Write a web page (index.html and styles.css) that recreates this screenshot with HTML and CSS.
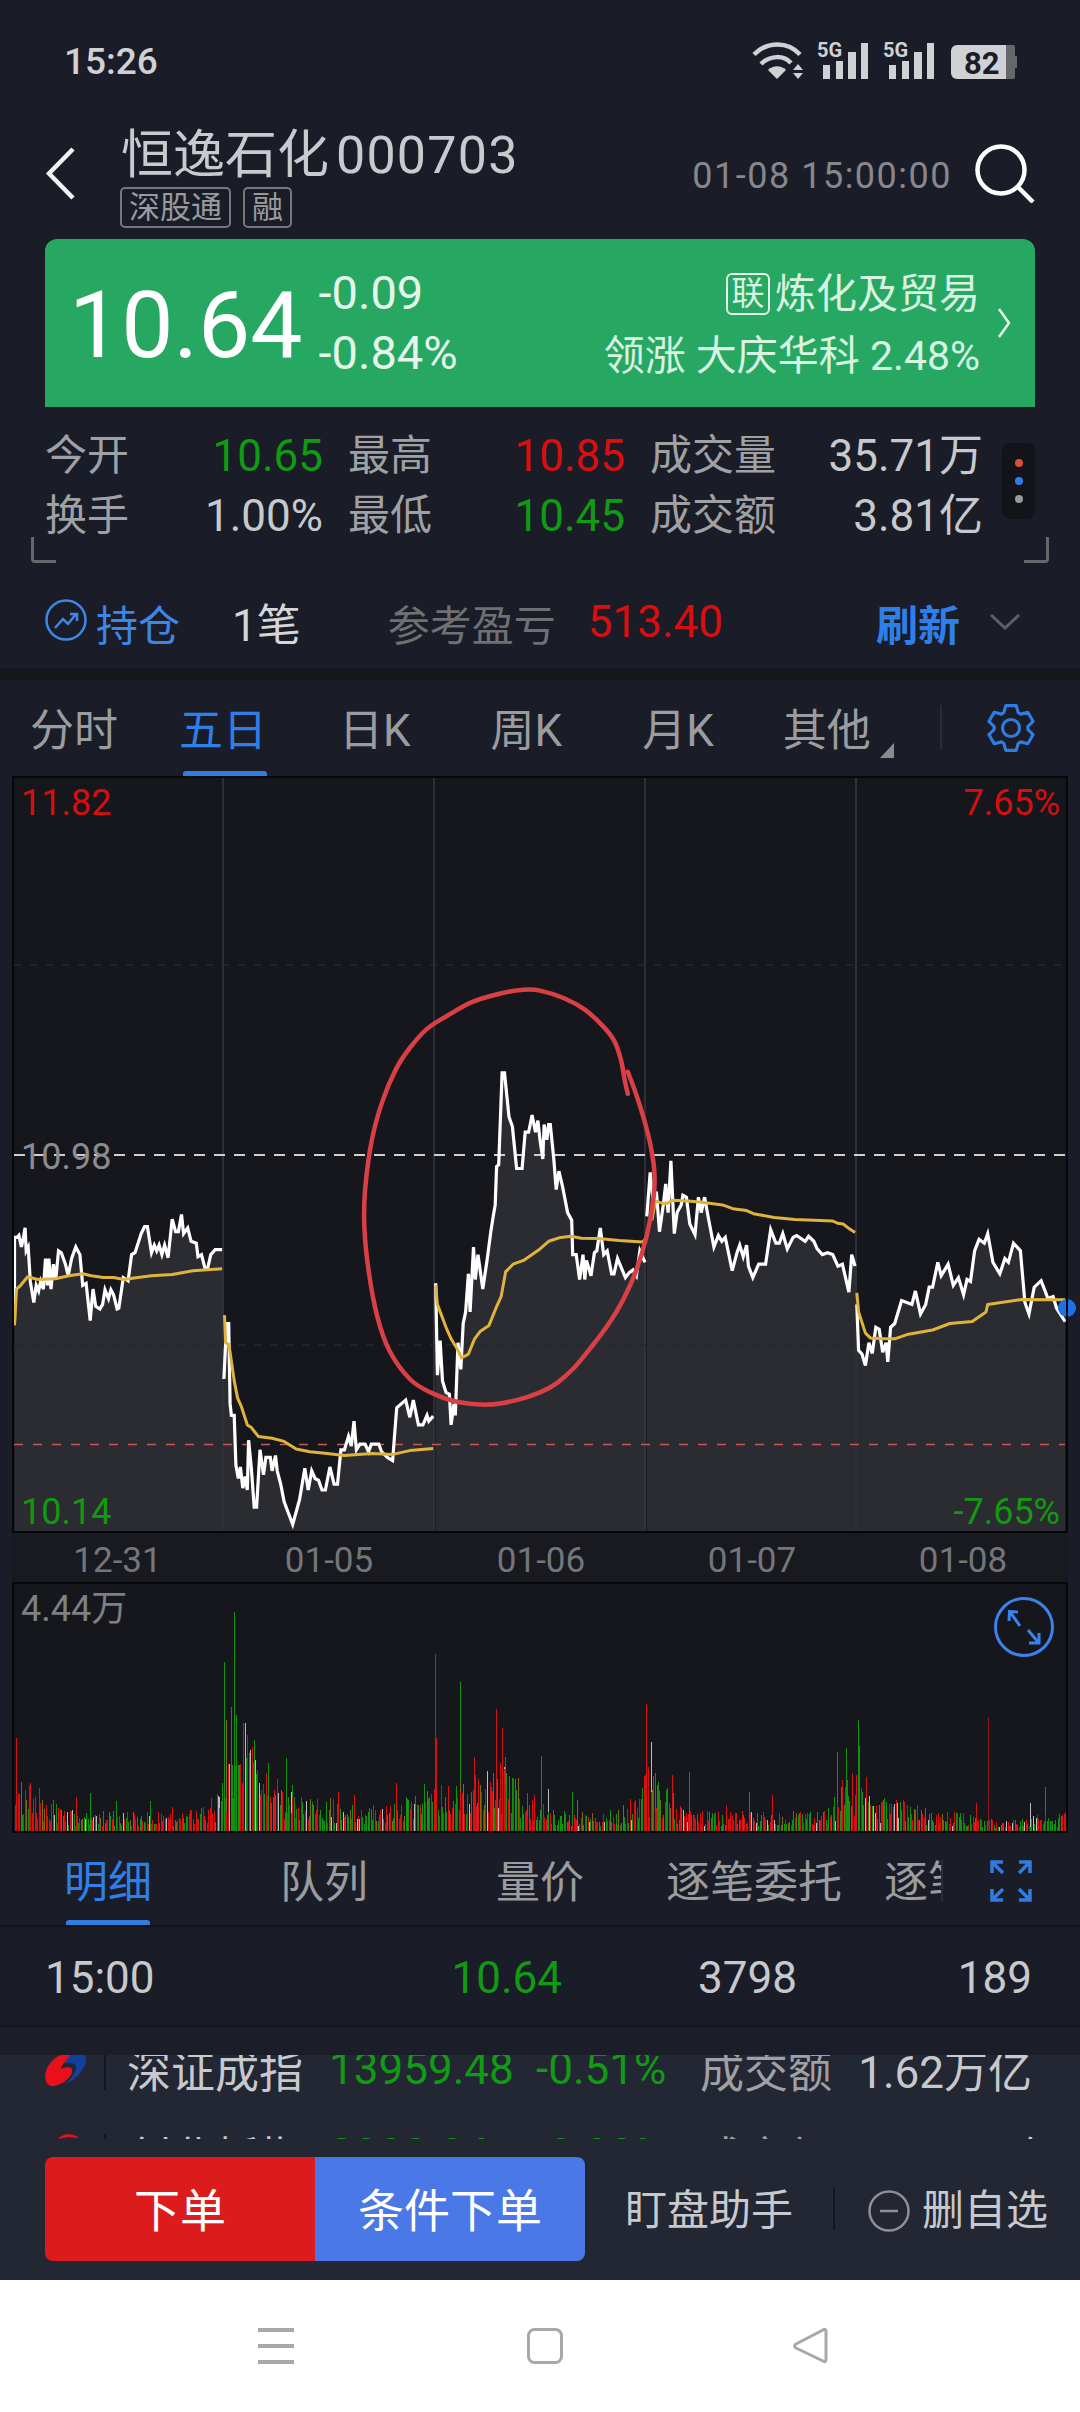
FILE: index.html
```html
<!DOCTYPE html>
<html lang="zh-CN">
<head>
<meta charset="utf-8">
<title>恒逸石化 000703</title>
<link rel="stylesheet" href="styles.css">
</head>
<body>
<div class="phone">
  <div class="status">
    <span class="time">15:26</span>
    <svg class="status-icons" width="264" height="36" viewBox="753 44 264 36">
      <g fill="none" stroke="#d0d1d5" stroke-width="4.5">
        <path d="M754 55.5C767 42 788 42 800 55.5"/>
        <path d="M761 65C770 56 784 56 791 64"/>
      </g>
      <path d="M768 71C773 66 781 66 786 71L777 80Z" fill="#d0d1d5"/>
      <path d="M798 65l5 6h-10zM798 80l5-6h-10z" fill="#d0d1d5"/>
      <text class="fiveg" x="817" y="58">5G</text>
      <path d="M823 66h7v14h-7zM836 62h7v18h-7zM848 53h8v27h-8zM861 44h7v36h-7z" fill="#d0d1d5"/>
      <text class="fiveg" x="883" y="58">5G</text>
      <path d="M889 66h7v14h-7zM902 62h7v18h-7zM914 53h8v27h-8zM927 44h7v36h-7z" fill="#d0d1d5"/>
      <path d="M957 46h49v34h-49a6 6 0 0 1-6-6v-22a6 6 0 0 1 6-6z" fill="#d0d1d5"/>
      <path d="M1006 46h7a2 2 0 0 1 2 2v9h2v12h-2v9a2 2 0 0 1-2 2h-7z" fill="#66676d"/>
      <text class="batt" x="964" y="75">82</text>
    </svg>
  </div>

  <header class="header">
    <svg class="back" width="31" height="53" viewBox="0 0 31 53"><path d="M28 2L4 26.500L28 51" fill="none" stroke="#f2f2f2" stroke-width="4.500"/></svg>
    <div class="title-col">
      <div class="title">恒逸石化<span class="code">000703</span></div>
      <div class="tags"><span class="tag">深股通</span><span class="tag">融</span></div>
    </div>
    <div class="header-right">
      <span class="date">01-08 15:00:00</span>
      <svg class="search" width="60" height="60" viewBox="0 0 60 60"><circle cx="26" cy="27" r="23.500" fill="none" stroke="#fff" stroke-width="4.500"/><path d="M43 44L58 59" stroke="#fff" stroke-width="4.500"/></svg>
    </div>
  </header>

  <section class="quote">
    <div class="price">10.64</div>
    <div class="change">
      <div>-0.09</div>
      <div>-0.84%</div>
    </div>
    <div class="sector">
      <div class="sector-top"><span class="lian">联</span>炼化及贸易</div>
      <div class="sector-bottom">领涨 大庆华科 2.48%</div>
    </div>
    <svg class="quote-arrow" width="14" height="30" viewBox="0 0 14 30"><path d="M2 1L12 15L2 29" fill="none" stroke="#e4f6ea" stroke-width="2.500"/></svg>
  </section>

  <section class="stats">
    <div class="stat-grid">
      <div class="stat"><span class="lbl">今开</span><span class="green">10.65</span></div>
      <div class="stat"><span class="lbl">最高</span><span class="red">10.85</span></div>
      <div class="stat"><span class="lbl">成交量</span><span class="val">35.71万</span></div>
      <div class="stat"><span class="lbl">换手</span><span class="val">1.00%</span></div>
      <div class="stat"><span class="lbl">最低</span><span class="green">10.45</span></div>
      <div class="stat"><span class="lbl">成交额</span><span class="val">3.81亿</span></div>
    </div>
    <div class="pill"><i class="dot dot-r"></i><i class="dot dot-b"></i><i class="dot dot-g"></i></div>
    <i class="corner corner-l"></i><i class="corner corner-r"></i>
  </section>

  <section class="hold">
    <svg class="hold-icon" width="42" height="42" viewBox="0 0 42 42"><circle cx="21" cy="21" r="19.500" fill="none" stroke="#3d87e8" stroke-width="2.500"/><path d="M10 29L18 20L23 25L31 15M25 15H32V22" fill="none" stroke="#3d87e8" stroke-width="2.500"/></svg>
    <span class="hold-name">持仓</span>
    <span class="hold-count">1笔</span>
    <span class="hold-label">参考盈亏</span>
    <span class="hold-value">513.40</span>
    <span class="hold-refresh">刷新</span>
    <svg class="hold-arrow" width="30" height="16" viewBox="0 0 30 16"><path d="M1 1L15 14L29 1" fill="none" stroke="#5f6066" stroke-width="3"/></svg>
  </section>
  <div class="band"></div>

  <nav class="tabs">
    <span class="tab tab-1">分时</span>
    <span class="tab tab-2 active">五日</span>
    <span class="tab tab-3">日K</span>
    <span class="tab tab-4">周K</span>
    <span class="tab tab-5">月K</span>
    <span class="tab tab-6">其他<svg class="tab-tri" width="14" height="15" viewBox="0 0 14 15"><path d="M14 0V15H0Z" fill="#8a8b8f"/></svg></span>
    <div class="tabs-tail">
      <i class="tab-div"></i>
      <svg width="48" height="48" viewBox="0 0 48 48" fill="none" stroke="#2f7de1" stroke-width="3.200" stroke-linejoin="round"><path d="M18.800 1.600H29.200L31.200 8.600L33.800 10.100L40.800 8.300L46 17.300L40.900 22.500V25.500L46 30.700L40.800 39.700L33.800 37.900L31.200 39.400L29.200 46.400H18.800L16.800 39.400L14.200 37.900L7.200 39.700L2 30.700L7.100 25.500V22.500L2 17.300L7.200 8.300L14.200 10.100L16.800 8.600Z"/><circle cx="24" cy="24" r="8.500"/></svg>
    </div>
  </nav>

  <section class="chart">
    <svg class="plot" id="price-svg" width="1056" height="757" viewBox="0 0 1056 757"></svg>
    <span class="axis axis-tl">11.82</span>
    <span class="axis axis-tr">7.65%</span>
    <span class="axis axis-ml">10.98</span>
    <span class="axis axis-bl">10.14</span>
    <span class="axis axis-br">-7.65%</span>
  </section>
  <div class="dates"><span>12-31</span><span>01-05</span><span>01-06</span><span>01-07</span><span>01-08</span></div>
  <section class="volume">
    <svg class="plot" id="vol-svg" width="1056" height="251" viewBox="0 0 1056 251"></svg>
    <span class="vol-max">4.44万</span>
    <svg class="vol-expand" width="60" height="60" viewBox="0 0 60 60" fill="none" stroke="#3b82ec" stroke-width="3"><circle cx="30" cy="30" r="28.500"/><path d="M26 29L16 15M15 24L15.500 14.500L24 15M34 33L44 45M45 36V46H35"/></svg>
  </section>

  <section class="sub">
    <div class="sub-list">
      <span class="sub-tab active">明细</span>
      <span class="sub-tab s2">队列</span>
      <span class="sub-tab s3">量价</span>
      <span class="sub-tab s4">逐笔委托</span>
      <span class="sub-tab s5">逐笔成交</span>
    </div>
    <i class="sub-div"></i>
    <svg class="sub-icon" width="42" height="42" viewBox="0 0 42 42" fill="none" stroke="#2f7de1" stroke-width="3.500"><path d="M2 13V2H13M2 2L13 13M40 13V2H29M40 2L29 13M2 29V40H13M2 40L13 29M40 29V40H29M40 40L29 29"/></svg>
  </section>
  <section class="tick">
    <span>15:00</span>
    <span class="num green">10.64</span>
    <span class="num val">3798</span>
    <span class="num val">189</span>
  </section>
  <div class="tick-gap"></div>

  <section class="ticker">
    <div class="ticker-row first">
      <div class="logo-cell">
        <svg width="42" height="44" viewBox="0 0 42 44"><path d="M22 6C10 8 1 18 0 29C0 38 6 41 13 38C23 34 30 26 26 21C23 19 16 22 16 22C17 17 22 12 28 10Z" fill="#e8101a"/><path d="M28 6C38 2 42 8 41 14C39 24 30 33 21 37C27 30 32 24 31 19C29 15 23 15 20 17C21 13 24 9 28 6Z" fill="#12409a"/></svg>
        <i class="logo-sep"></i>
      </div>
      <span class="val">深证成指</span><span class="green">13959.48</span><span class="green">-0.51%</span><span class="lbl">成交额</span><span class="num val">1.62万亿</span>
    </div>
    <div class="ticker-row second">
      <div class="logo-cell">
        <svg width="42" height="44" viewBox="0 0 42 44"><path d="M13 6C18 0 28 0 34 5L23 4Z" fill="#e8101a"/><path d="M18 6H32L36 10H14Z" fill="#12409a"/></svg>
        <i class="logo-sep"></i>
      </div>
      <span class="val">创业板指</span><span class="green">2888.84</span><span class="green">-0.88%</span><span class="lbl">成交额</span><span class="num val">7556.51亿</span>
    </div>
  </section>

  <section class="actions">
    <div class="btns"><span class="btn btn-red">下单</span><span class="btn btn-blue">条件下单</span></div>
    <span class="act-text helper">盯盘助手</span>
    <i class="act-div"></i>
    <svg class="act-icon" width="42" height="42" viewBox="0 0 42 42" fill="none" stroke="#8f9094" stroke-width="2.500"><circle cx="21" cy="21" r="19.500"/><path d="M12 21H30"/></svg>
    <span class="act-text remove">删自选</span>
  </section>

  <footer class="nav">
    <svg width="36" height="36" viewBox="0 0 36 36" fill="#a8a8a8"><path d="M0 0H36V4H0zM0 16H36V20H0zM0 32H36V36H0z"/></svg>
    <svg class="nav-home" width="36" height="36" viewBox="0 0 36 36"><rect x="1.500" y="1.500" width="33" height="33" rx="6" fill="none" stroke="#a8a8a8" stroke-width="3"/></svg>
    <svg class="nav-back" width="36" height="36" viewBox="0 0 36 36"><path d="M33 2V31Q33 35 30 33L3 20Q0 18 3 16L30 2Q33 0 33 4Z" fill="none" stroke="#a8a8a8" stroke-width="3"/></svg>
  </footer>
</div>
<script src="chart.js"></script>
</body>
</html>
```
FILE: styles.css
```css
* { box-sizing: border-box; }
html, body { margin: 0; padding: 0; }
body { background: #1a1d27; font-family: Roboto, "Noto Sans CJK SC", sans-serif; color: #c8c9cc; }
i { display: block; font-style: normal; }
.phone { width: 1080px; height: 2412px; display: flex; flex-direction: column; background: #1a1d27; overflow: hidden; }
.green { color: #119a14; }
.red { color: #d90f0f; }
.val { color: #c8c9cc; }
.lbl { color: #a0a1a4; }

.status { height: 122px; flex: none; display: flex; align-items: center; padding-left: 64px; }
.time { font-size: 37px; font-weight: 500; color: #d0d1d5; }
.status-icons { margin-left: auto; margin-right: 63px; overflow: visible; }
.fiveg { font: 700 20px Roboto, sans-serif; fill: #d0d1d5; }
.batt { font: 700 31px Roboto, sans-serif; fill: #1a1d27; }

.header { height: 117px; flex: none; display: flex; align-items: flex-start; padding: 0 45px; }
.back { margin-top: 25px; flex: none; }
.title-col { margin-left: 44px; padding-top: 7px; }
.title { font-size: 52px; line-height: 54px; margin-left: 1px; color: #c9cacd; white-space: nowrap; }
.code { margin-left: 7px; letter-spacing: 1.200px; }
.tags { display: flex; gap: 12px; margin-top: 4px; }
.tag { height: 41px; line-height: 37px; padding: 0 7px; border: 2px solid #77787c; border-radius: 5px; font-size: 31px; color: #9a9b9e; }
.header-right { margin-left: auto; margin-top: 21px; display: flex; align-items: center; gap: 23px; }
.date { font-size: 36px; color: #87888c; letter-spacing: 1.500px; white-space: nowrap; padding-top: 6px; }

.quote { height: 168px; flex: none; margin: 0 45px; background: #27a862; border-radius: 12px 12px 0 0; display: flex; align-items: center; color: #fff; }
.price { font-size: 93px; line-height: 100px; margin: 6px 0 0 24px; }
.change { margin-left: 16px; font-size: 47px; line-height: 60px; color: #e4f6ea; }
.sector { margin-left: auto; margin-top: 3px; text-align: right; color: #d8f3e2; }
.sector-top { display: flex; justify-content: flex-end; align-items: center; font-size: 41px; line-height: 46px; margin-bottom: 16px; }
.lian { width: 44px; height: 42px; line-height: 37px; text-align: center; border: 2px solid #e4f6ea; border-radius: 6px; font-size: 33px; margin-right: 5px; }
.sector-bottom { font-size: 41px; line-height: 46px; white-space: nowrap; }
.quote-arrow { margin: 0 24px 0 17px; flex: none; }

.stats { position: relative; height: 167px; flex: none; padding: 19px 0 0 45px; }
.stat-grid { display: grid; grid-template-columns: 278px 277px 333px; column-gap: 25px; grid-auto-rows: 60px; font-size: 44px; line-height: 60px; }
.stat { display: flex; justify-content: space-between; white-space: nowrap; }
.stat .lbl { font-size: 42px; }
.pill { position: absolute; right: 45px; top: 36px; width: 33px; height: 76px; border-radius: 8px; background: #12141a; display: flex; flex-direction: column; align-items: center; justify-content: center; gap: 10px; }
.dot { width: 8px; height: 8px; border-radius: 50%; }
.dot-r { background: #d94f3a; }
.dot-b { background: #2f7de8; }
.dot-g { background: #999a9d; }
.corner { position: absolute; top: 130px; width: 25px; height: 26px; border-bottom: 3px solid #66676b; }
.corner-l { left: 31px; border-left: 3px solid #66676b; border-bottom-left-radius: 4px; }
.corner-r { left: 1024px; border-right: 3px solid #66676b; border-bottom-right-radius: 4px; }

.hold { height: 94px; flex: none; display: flex; align-items: center; padding: 2px 0 0 45px; font-size: 42px; white-space: nowrap; }
.hold-icon { margin-top: -4px; }
.hold-name { margin-left: 9px; color: #3d87e8; }
.hold-count { margin-left: 52px; color: #d5d6d8; font-size: 44px; }
.hold-label { margin-left: 87px; color: #6f7074; }
.hold-value { margin-left: 32px; color: #d90f0f; font-size: 44px; }
.hold-refresh { margin-left: 153px; color: #2f7fe8; font-weight: 700; }
.hold-arrow { margin-left: 30px; }
.band { height: 12px; flex: none; background: #15171d; }

.tabs { position: relative; height: 96px; flex: none; display: flex; padding: 0 45px 0 30px; font-size: 44px; line-height: 102px; color: #9b9c9f; }
.tab { position: relative; white-space: nowrap; }
.tab-2 { margin-left: 61px; }
.tab-3 { margin-left: 72px; }
.tab-4 { margin-left: 80px; }
.tab-5 { margin-left: 80px; }
.tab-6 { margin-left: 69px; }
.tab.active { color: #2f7fe8; }
.tab.active::after { content: ""; position: absolute; left: 4px; right: 0; bottom: 0; height: 5px; background: #2f7de1; border-radius: 3px 3px 0 0; }
.tab-tri { position: absolute; left: 97px; top: 63px; }
.tabs-tail { margin-left: auto; display: flex; align-items: center; gap: 45px; height: 96px; padding-bottom: 1px; }
.tab-div { width: 2px; height: 45px; background: #2a2d37; }

.chart, .volume { position: relative; flex: none; margin: 0 12px; background: #16171c; }
.chart { height: 757px; outline: 2px solid #05070a; outline-offset: -2px; }
.plot { display: block; overflow: visible; }
.axis { position: absolute; font-size: 36px; line-height: 36px; }
.axis-tl { left: 9px; top: 9px; color: #d40f0f; }
.axis-tr { right: 8px; top: 9px; color: #d40f0f; }
.axis-ml { left: 9px; top: 363px; color: #8b8b8f; }
.axis-bl { left: 9px; top: 718px; color: #12990f; }
.axis-br { right: 8px; top: 718px; color: #12990f; }

.dates { height: 49px; flex: none; margin: 0 12px; display: grid; grid-template-columns: 211px 212px 212px 210px 212px; text-align: center; font-size: 35px; line-height: 56px; color: #75767a; background: #181a20; }
.volume { height: 251px; outline: 2px solid #05070a; outline-offset: -2px; }
.vol-max { position: absolute; left: 9px; top: 9px; font-size: 36px; line-height: 36px; color: #7f8084; }
.vol-expand { position: absolute; left: 982px; top: 15px; }

.sub { position: relative; height: 94px; flex: none; display: flex; align-items: center; border-bottom: 2px solid #12141a; }
.sub-list { width: 941px; height: 92px; flex: none; display: flex; padding-left: 64px; overflow: hidden; font-size: 44px; line-height: 100px; color: #9b9c9f; white-space: nowrap; }
.sub-tab { position: relative; flex: none; }
.sub-tab.active { color: #2f7fe8; }
.sub-tab.active::after { content: ""; position: absolute; left: 2px; right: 2px; bottom: 0; height: 5px; background: #2f7de1; border-radius: 3px 3px 0 0; }
.s2 { margin-left: 128px; }
.s3 { margin-left: 128px; }
.s4 { margin-left: 82px; }
.s5 { margin-left: 42px; }
.sub-div { width: 2px; height: 42px; background: #2a2d37; margin-top: 4px; }
.sub-icon { margin-left: 47px; margin-top: 4px; }

.tick { height: 100px; flex: none; display: grid; grid-template-columns: 259px 258px 235px 235px; padding: 4px 0 0 45px; font-size: 44px; line-height: 94px; border-bottom: 2px solid #13151c; color: #c8c9cc; }
.num { text-align: right; }
.tick-gap { height: 28px; flex: none; background: #1b1e28; }

.ticker { height: 84px; flex: none; background: #232633; overflow: hidden; }
.ticker-row { height: 84px; padding-left: 45px; display: grid; grid-template-columns: 82px 202px 207px 164px 157px 175px; align-items: center; font-size: 44px; white-space: nowrap; }
.ticker-row.first { margin-top: -28px; }
.ticker-row.second { margin-top: 2px; }
.logo-cell { display: flex; align-items: center; height: 44px; }
.logo-sep { width: 2px; height: 42px; background: #14161d; margin-left: 17px; }

.actions { height: 141px; flex: none; background: #232633; display: flex; align-items: flex-start; padding: 18px 0 0 45px; font-size: 42px; color: #c8c9cc; }
.btns { display: flex; height: 104px; border-radius: 8px; overflow: hidden; flex: none; }
.btn { width: 270px; line-height: 108px; text-align: center; font-size: 46px; color: #fff; }
.btn-red { background: #dc1c1c; }
.btn-blue { background: #4a78e6; }
.act-text { line-height: 108px; white-space: nowrap; }
.helper { margin-left: 40px; }
.act-div { width: 2px; height: 42px; background: #14161d; margin: 31px 0 0 40px; }
.act-icon { margin: 33px 0 0 33px; }
.remove { margin-left: 12px; }

.nav { height: 132px; flex: none; background: #fff; display: flex; align-items: center; padding: 0 0 0 258px; }
.nav-home { margin-left: 233px; }
.nav-back { margin-left: 230px; }
```
FILE: chart.js
```js
// Five-day intraday chart. Points are traced samples of the price series.
(function () {
  var ZX = 540 / 1568, ZY = 600 / 1568, SHIFT = 1568;

  var price = [
    { off: 0, d: [42,945,42,725,50,725,55,720,62,750,68,725,73,700,76,760,82,750,88,840,98,895,105,850,112,865,118,840,126,860,132,780,138,850,142,780,148,860,155,795,162,835,170,760,178,765,190,795,198,825,208,780,220,750,232,770,240,850,250,845,262,942,270,860,278,905,290,912,298,900,305,862,315,885,322,862,330,875,340,912,345,910,358,830,372,838,382,770,392,765,410,715,420,697,428,697,440,765,448,745,455,760,462,745,470,770,478,745,488,778,500,677,510,710,518,710,527,665,533,715,545,700,555,735,570,740,575,775,585,770,595,805,603,805,612,770,625,757,645,757] },
    { off: 0, d: [650,1095,658,950,664,950,668,1160,672,1190,680,1190,685,1320,692,1355,698,1325,705,1380,712,1350,718,1385,722,1255,730,1330,738,1430,745,1430,755,1280,765,1345,772,1300,785,1300,790,1335,800,1295,805,1335,815,1370,825,1415,835,1440,850,1475,870,1410,885,1328,895,1385,905,1335,915,1355,925,1360,935,1385,945,1385,958,1325,970,1370,980,1370,990,1280,1000,1280,1012,1245,1020,1270,1028,1205,1035,1280,1045,1265,1060,1265,1070,1285,1078,1265,1100,1265,1108,1285,1125,1300,1140,1308,1152,1170,1165,1160,1178,1150,1190,1195,1200,1150,1215,1215,1228,1215,1240,1190,1245,1205,1258,1192] },
    { off: 0, d: [1265,845,1270,1085,1278,995,1285,1100,1295,1130,1305,1135,1310,1215,1318,1160,1322,1190,1330,1000,1338,1070,1345,950,1352,920,1360,820,1365,920,1375,750,1380,835,1388,770,1402,860,1415,780,1425,710,1432,670,1438,640,1442,540,1448,535,1458,295,1465,295,1478,410,1488,435,1500,545,1516,545,1525,450,1535,450,1545,405,1555,450,1562,420,1568,470,1576,520,1580,430,1588,470,1593,430,1598,430,1608,520,1615,600,1623,552,1633,590,1648,660,1660,680,1663,770,1673,770,1683,835,1693,770,1698,835,1703,785,1716,825,1726,765,1733,760,1743,700,1753,770,1763,760,1776,820,1783,820,1793,780,1816,830,1826,818,1838,810,1848,825,1858,760,1873,790] },
    { off: SHIFT, d: [310,670,320,555,330,640,338,605,347,710,358,640,365,585,372,660,380,525,390,715,398,660,410,640,415,615,425,620,435,690,450,718,460,620,468,660,478,620,490,680,505,750,518,720,528,735,538,725,558,812,572,765,580,745,590,775,600,745,605,800,618,830,635,795,655,795,670,705,685,740,695,740,705,715,718,755,735,725,745,720,770,735,780,722,795,735,805,755,820,770,835,765,850,770,865,800,878,795,897,868,905,770,915,800] },
    { off: SHIFT, d: [920,900,925,1020,935,1030,945,1060,955,1000,965,1028,975,960,985,965,995,1025,1005,1000,1010,1050,1018,960,1030,950,1050,890,1065,895,1080,900,1090,865,1105,925,1120,900,1130,855,1140,855,1155,790,1165,825,1185,795,1200,850,1215,830,1230,875,1240,835,1250,840,1262,760,1275,730,1290,740,1300,715,1315,790,1335,820,1350,780,1360,790,1375,740,1395,760,1408,895,1420,925,1435,855,1455,838,1475,885,1490,880,1500,910,1525,945] }
  ];

  var average = [
    { off: 0, d: [42,955,48,860,60,850,80,828,110,835,160,833,200,825,240,820,265,825,300,830,330,830,360,835,400,830,440,825,500,822,560,812,645,807] },
    { off: 0, d: [652,928,655,1000,665,1005,680,1100,690,1145,700,1165,718,1215,730,1222,750,1245,790,1250,825,1258,860,1278,900,1285,950,1290,1000,1295,1080,1290,1140,1292,1190,1282,1258,1277] },
    { off: 0, d: [1265,850,1270,900,1295,960,1310,990,1330,1020,1340,1040,1360,1030,1378,990,1395,970,1420,955,1440,910,1455,880,1468,815,1490,795,1520,785,1568,755,1593,735,1628,725,1658,722,1688,727,1738,728,1798,733,1866,737,1878,725] },
    { off: SHIFT, d: [325,680,335,630,365,638,385,628,430,630,470,633,530,640,560,650,600,655,620,663,680,673,740,678,850,682,865,688,880,690,895,700,915,712] },
    { off: SHIFT, d: [920,870,925,920,945,975,960,988,1000,990,1030,990,1070,978,1140,967,1190,950,1255,945,1295,920,1300,900,1400,887,1525,888] }
  ];

  var ring = [1823,350,1813,310,1803,260,1783,210,1748,170,1698,130,1638,100,1568,80,1520,78,1450,88,1370,110,1300,145,1240,180,1190,230,1150,285,1110,370,1080,470,1060,600,1058,700,1070,810,1095,930,1130,1020,1190,1095,1250,1130,1330,1155,1420,1162,1500,1150,1568,1130,1618,1105,1668,1065,1718,1010,1768,950,1808,890,1848,810,1878,720,1898,620,1900,550,1888,480,1868,410,1843,340,1823,292];

  function toXY(u, v, off) {
    return [((u + (off || 0)) * ZX - 12).toFixed(1), (960 + v * ZY - 776).toFixed(1)];
  }
  function pts(s) {
    var out = [];
    for (var i = 0; i < s.d.length; i += 2) out.push(toXY(s.d[i], s.d[i + 1], s.off).join(","));
    return out;
  }
  function smooth(d) {
    var p = [];
    for (var i = 0; i < d.length; i += 2) {
      var q = toXY(d[i], d[i + 1], 0);
      p.push([+q[0], +q[1]]);
    }
    var s = "M" + p[0].join(" ");
    for (var k = 0; k < p.length - 1; k++) {
      var a = p[k - 1] || p[k], b = p[k], c = p[k + 1], e = p[k + 2] || c;
      s += "C" + (b[0] + (c[0] - a[0]) / 6).toFixed(1) + " " + (b[1] + (c[1] - a[1]) / 6).toFixed(1) + " " +
        (c[0] - (e[0] - b[0]) / 6).toFixed(1) + " " + (c[1] - (e[1] - b[1]) / 6).toFixed(1) + " " + c[0] + " " + c[1];
    }
    return s;
  }

  var h = "";
  var BOTTOM = 755;
  price.forEach(function (s) {
    var p = pts(s);
    var x0 = p[0].split(",")[0], x1 = p[p.length - 1].split(",")[0];
    h += '<polygon fill="#2b2c31" points="' + x0 + "," + BOTTOM + " " + p.join(" ") + " " + x1 + "," + BOTTOM + '"/>';
  });
  [211, 422, 633, 844].forEach(function (x) {
    h += '<line x1="' + x + '" x2="' + x + '" y1="2" y2="755" stroke="#363945" stroke-width="1.500"/>';
  });
  [[189, "#26272e", "8 8", 1.5], [379, "#cfcfd0", "11 9", 2], [569, "#26272e", "8 8", 1.5], [668.5, "#c9574f", "9 10", 1.5]].forEach(function (l) {
    h += '<line x1="2" x2="1053" y1="' + l[0] + '" y2="' + l[0] + '" stroke="' + l[1] + '" stroke-dasharray="' + l[2] + '" stroke-width="' + l[3] + '"/>';
  });
  price.forEach(function (s) {
    h += '<polyline fill="none" stroke="#fff" stroke-width="3.200" stroke-linejoin="miter" points="' + pts(s).join(" ") + '"/>';
  });
  average.forEach(function (s) {
    h += '<polyline fill="none" stroke="#e0b33c" stroke-width="3" stroke-linejoin="round" points="' + pts(s).join(" ") + '"/>';
  });
  h += '<path fill="none" stroke="#d94046" stroke-width="4.500" stroke-linecap="round" d="' + smooth(ring) + '"/>';
  h += '<circle cx="1055" cy="532" r="9" fill="#1f6fe8"/>';
  document.getElementById("price-svg").innerHTML = h;

  // Volume bars: a seeded base noise whose height follows the session activity, plus the traced peaks.
  var seed = 20210108;
  function rnd() { seed = (seed * 1103 + 12345) % 65536; return seed / 65536; }
  var BASE = 249;
  function gauss(x, c, w, a) { return a * Math.exp(-((x - c) * (x - c)) / (2 * w * w)); }
  function envelope(x) {
    return 18 + gauss(x, 8, 22, 36) + gauss(x, 235, 18, 70) + gauss(x, 290, 50, 14) + gauss(x, 425, 25, 30) +
      gauss(x, 490, 24, 40) + gauss(x, 640, 15, 38) + gauss(x, 840, 12, 40) + gauss(x, 880, 20, 12) - gauss(x, 990, 22, 8);
  }
  function redShare(x) {
    if (x < 40) return 0.75;
    if (x > 430 && x < 495) return 0.65;
    if (x > 225 && x < 250) return 0.6;
    return 0.42;
  }
  var red = "", green = "", grey = "", olive = "", dark = "";
  for (var x = 3; x < 1054; x += 1.4) {
    var barH = envelope(x) * (0.25 + 0.85 * rnd());
    var c = rnd(), bx = Math.round(x);
    var seg = "M" + bx + ".5 " + BASE + "V" + (BASE - barH).toFixed(0);
    if (c < redShare(x)) red += seg;
    else if (c > 0.91) grey += seg;
    else if (c > 0.84) olive += seg;
    else green += seg;
  }
  var peaks = [
    [23, 535, "r"], [18, 575, "r"], [325, 305, "g"], [340, 155, "g"], [335, 440, "g"], [343, 465, "g"], [328, 480, "o"], [355, 490, "w"], [352, 488, "r"], [370, 600, "w"], [373, 630, "r"],
    [415, 595, "g"], [424, 675, "g"], [422, 695, "w"], [110, 710, "r"], [130, 700, "g"], [168, 722, "g"], [217, 722, "g"], [250, 740, "r"], [318, 710, "w"], [490, 697, "r"], [514, 705, "r"],
    [575, 670, "r"], [631, 283, "r"], [633, 535, "r"], [640, 675, "r"], [667, 365, "g"], [668, 665, "o"], [688, 590, "r"], [690, 645, "r"], [720, 447, "r"], [716, 640, "o"], [728, 505, "r"], [725, 610, "r"], [733, 590, "g"], [731, 620, "w"],
    [765, 700, "g"], [785, 587, "g"], [795, 688, "w"], [830, 697, "g"], [838, 720, "o"], [885, 750, "g"], [920, 725, "r"], [938, 433, "r"], [941, 620, "r"], [945, 545, "w"], [950, 640, "g"], [953, 675, "g"], [975, 645, "r"], [977, 700, "g"], [1000, 635, "g"],
    [1054, 735, "r"], [1087, 695, "g"], [1120, 705, "r"], [1215, 575, "g"], [1228, 565, "g"], [1236, 670, "r"], [1245, 480, "g"], [1247, 558, "g"], [1257, 650, "r"], [1278, 725, "r"], [1316, 735, "r"], [1416, 730, "r"], [1434, 472, "d"], [1495, 728, "w"], [1516, 682, "g"], [1545, 755, "r"]
  ];
  peaks.forEach(function (p) {
    var px = Math.round(p[0] * 0.689 - 12);
    var s = "M" + px + ".5 " + BASE + "V" + Math.round(1560 + p[1] / 3 - 1582);
    if (p[2] === "r") red += s;
    else if (p[2] === "g") green += s;
    else if (p[2] === "w") grey += s;
    else if (p[2] === "o") olive += s;
    else dark += s;
  });
  document.getElementById("vol-svg").innerHTML =
    '<g fill="none" stroke-width="1" shape-rendering="crispEdges">' +
    '<path stroke="#b9babc" d="' + grey + '"/>' +
    '<path stroke="#12930f" d="' + green + '"/>' +
    '<path stroke="#7c6a10" d="' + olive + '"/>' +
    '<path stroke="#d81010" d="' + red + '"/>' +
    '<path stroke="#8c1a1a" d="' + dark + '"/></g>';
})();
```
